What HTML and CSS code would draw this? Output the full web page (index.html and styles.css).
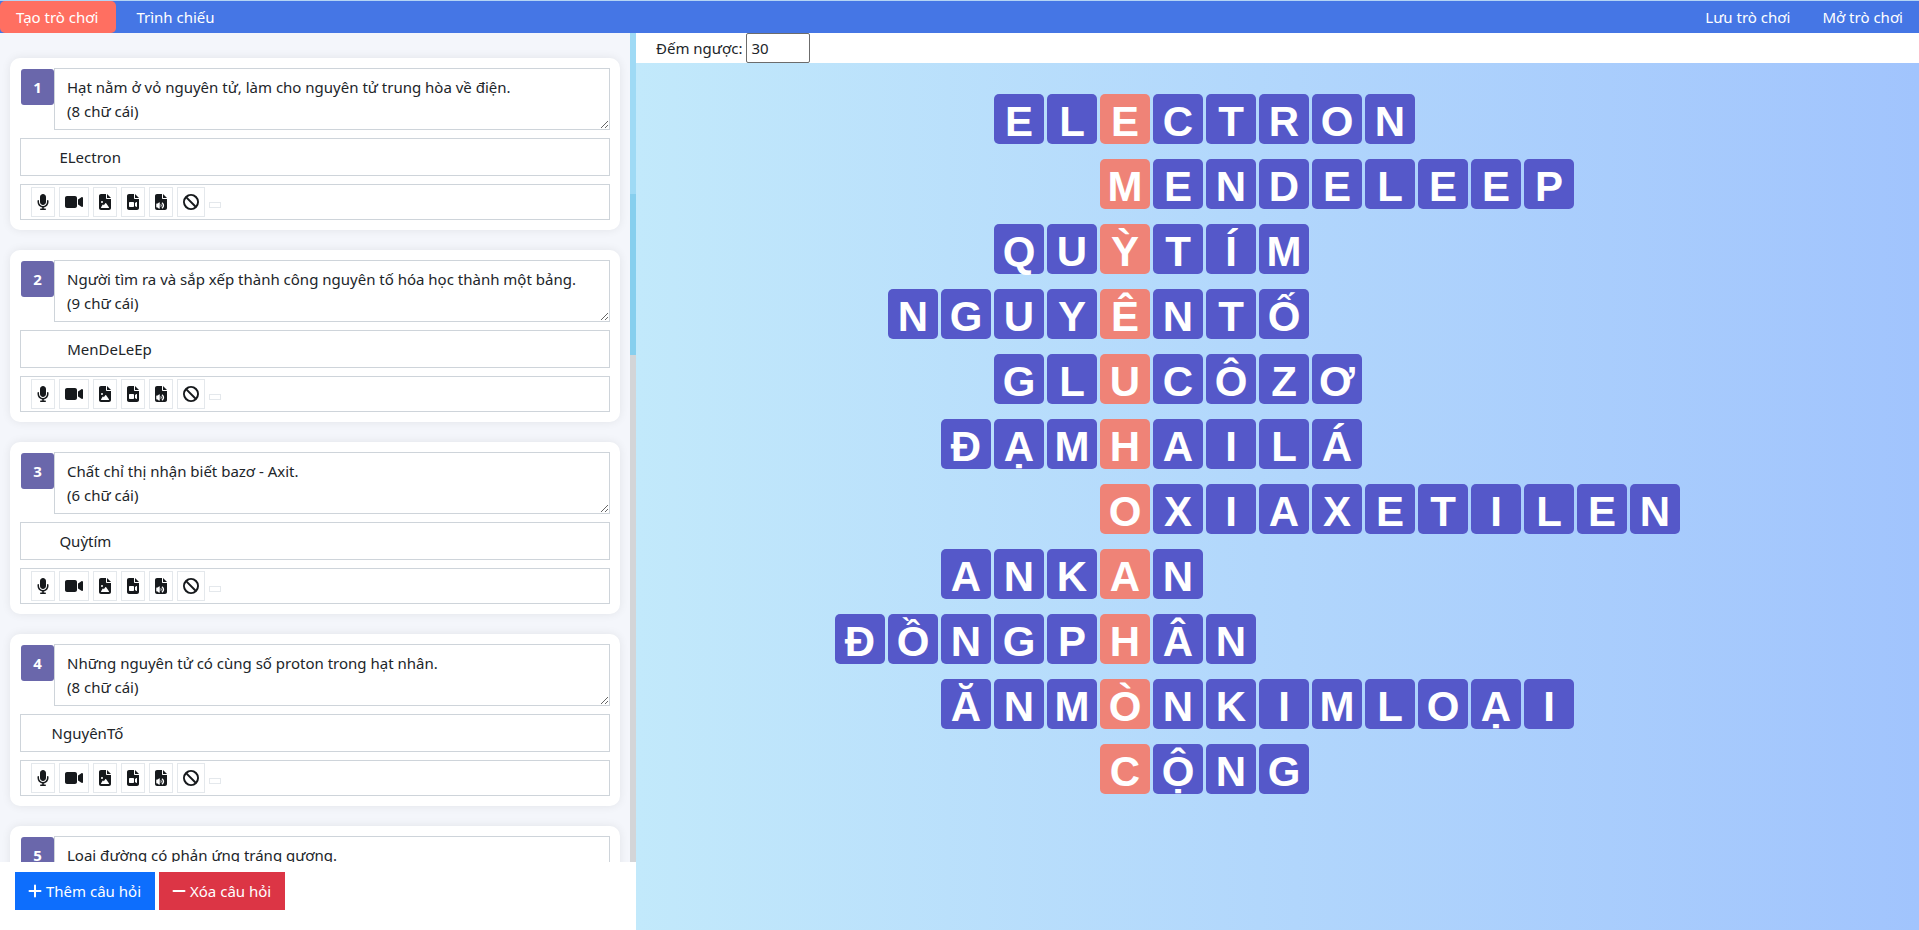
FILE: index.html
```html
<!DOCTYPE html>
<html lang="vi">
<head>
<meta charset="utf-8">
<title>Ô chữ</title>
<link rel="stylesheet" href="styles.css">
</head>
<body>
<svg class="sprite" aria-hidden="true">
  <symbol id="mic" viewBox="0 0 384 512"><path d="M192 0c-53 0-96 43-96 96v160c0 53 43 96 96 96s96-43 96-96V96c0-53-43-96-96-96zM64 216c0-13-11-24-24-24s-24 11-24 24v40c0 89 66 163 152 174v34h-48c-13 0-24 11-24 24s11 24 24 24h144c13 0 24-11 24-24s-11-24-24-24h-48v-34c86-11 152-85 152-174v-40c0-13-11-24-24-24s-24 11-24 24v40c0 71-57 128-128 128S64 327 64 256v-40z"/></symbol>
  <symbol id="video" viewBox="0 0 576 512"><path d="M0 128c0-35 29-64 64-64h256c35 0 64 29 64 64v256c0 35-29 64-64 64H64c-35 0-64-29-64-64V128zm559-28c10 6 17 16 17 28v256c0 12-7 23-17 28s-23 5-33-1l-96-64-14-10V175l14-10 96-64c10-6 23-7 33-1z"/></symbol>
  <symbol id="file-image" viewBox="0 0 384 512"><path fill-rule="evenodd" d="M64 0C29 0 0 29 0 64v384c0 35 29 64 64 64h256c35 0 64-29 64-64V160H256c-18 0-32-14-32-32V0H64zm192 0v128h128L256 0zM64 256a32 32 0 1 1 64 0 32 32 0 1 1-64 0zm152 32c5 0 10 3 13 7l88 128c3 5 4 11 1 16s-8 9-14 9H80c-6 0-11-3-14-9s-2-12 1-17l48-80c3-4 8-7 13-7s10 3 13 7l12 19 49-66c3-4 8-7 14-7z"/></symbol>
  <symbol id="file-video" viewBox="0 0 384 512"><path fill-rule="evenodd" d="M64 0C29 0 0 29 0 64v384c0 35 29 64 64 64h256c35 0 64-29 64-64V160H256c-18 0-32-14-32-32V0H64zm192 0v128h128L256 0zM64 288c0-18 14-32 32-32h96c18 0 32 14 32 32v96c0 18-14 32-32 32H96c-18 0-32-14-32-32v-96zm237 125-45-29v-96l45-29c8-6 19 0 19 10v134c0 10-11 16-19 10z"/></symbol>
  <symbol id="file-audio" viewBox="0 0 384 512"><path fill-rule="evenodd" d="M64 0C29 0 0 29 0 64v384c0 35 29 64 64 64h256c35 0 64-29 64-64V160H256c-18 0-32-14-32-32V0H64zm192 0v128h128L256 0zM56 304h27l45-36c10-8 24-1 24 12v176c0 13-14 20-24 12l-45-36H56c-9 0-16-7-16-16v-96c0-9 7-16 16-16zm133 16c34 20 34 76 0 96l-14-22c14-14 14-38 0-52l14-22zm43-56c80 48 80 160 0 208l-22-34c50-36 50-104 0-140l22-34z"/></symbol>
  <symbol id="ban" viewBox="0 0 512 512"><path fill-rule="evenodd" d="M256 0a256 256 0 1 0 0 512 256 256 0 1 0 0-512zm111 412L100 145a192 192 0 0 0 267 267zm45-45A192 192 0 0 0 145 100l267 267z"/></symbol>
  <symbol id="plus" viewBox="0 0 448 512"><path d="M256 80a32 32 0 1 0-64 0v144H48a32 32 0 1 0 0 64h144v144a32 32 0 1 0 64 0V288h144a32 32 0 1 0 0-64H256V80z"/></symbol>
  <symbol id="minus" viewBox="0 0 448 512"><path d="M48 224h352a32 32 0 1 1 0 64H48a32 32 0 1 1 0-64z"/></symbol>
</svg>

<nav class="navbar">
  <button class="nav-item active" type="button">Tạo trò chơi</button>
  <button class="nav-item" type="button">Trình chiếu</button>
  <span class="spacer"></span>
  <button class="nav-item" type="button">Lưu trò chơi</button>
  <button class="nav-item" type="button">Mở trò chơi</button>
</nav>

<div class="workspace">
  <section class="editor">
    <div class="scroll-area">
      <div class="questions" id="questions"></div>
      <div class="scrollbar"><div class="before"></div><div class="thumb"></div><div class="after"></div></div>
    </div>
    <div class="actions">
      <button class="btn add" type="button"><svg class="sign"><use href="#plus"/></svg>Thêm câu hỏi</button>
      <button class="btn remove" type="button"><svg class="sign"><use href="#minus"/></svg>Xóa câu hỏi</button>
    </div>
  </section>

  <main class="preview">
    <div class="timer">
      <label for="countdown">Đếm ngược:</label>
      <input id="countdown" type="text" value="30">
    </div>
    <div class="stage"><div class="board" id="board"></div></div>
  </main>
</div>
<script src="app.js"></script>
</body>
</html>
```

FILE: styles.css
```css
* { box-sizing: border-box; }

body {
  margin: 0;
  height: 100vh;
  display: flex;
  flex-direction: column;
  overflow: hidden;
  border-top: 1px solid #b4d4f4;
  font: 15px/24px "Noto Sans", "Open Sans", sans-serif;
  color: #212529;
  background: #fff;
}

button, input, textarea { font: inherit; color: inherit; }
.sprite { display: none; }

.navbar { display: flex; flex: none; height: 32px; background: #4576e5; }
.nav-item {
  padding: 0 16px;
  border: 0;
  border-radius: 5px;
  background: none;
  color: #fff;
}
.nav-item.active { margin-right: 4px; padding-right: 18px; background: #ff6f61; }
.spacer { flex: 1; }

.workspace { flex: 1; min-height: 0; display: flex; }

.editor { flex: 0 0 636px; display: flex; flex-direction: column; }
.scroll-area { flex: 1; min-height: 0; display: flex; background: #f4f6fb; }
.questions {
  flex: 1;
  overflow: hidden;
  padding: 25px 10px 0;
  display: flex;
  flex-direction: column;
  gap: 20px;
}
.scrollbar { flex: none; width: 6px; display: flex; flex-direction: column; }
.before { flex: 161; background: #9fdaf5; }
.thumb { flex: 161; background: #87cfee; }
.after { flex: 507; background: #d3d5d8; }

.card {
  flex: none;
  display: flex;
  flex-direction: column;
  gap: 8px;
  padding: 10px;
  border-radius: 10px;
  background: #fff;
  box-shadow: 0 0 10px rgba(0, 0, 0, 0.08);
}
.question { display: flex; align-items: flex-start; }
.number {
  flex: none;
  width: 33px;
  margin: 1px 0 0 1px;
  padding: 6px 0;
  border-radius: 3px;
  background: #6a67ab;
  color: #fff;
  font-weight: 700;
  text-align: center;
}
.prompt, .answer, .media { border: 1px solid #ced4da; background: #fff; }
.prompt { flex: 1; height: 62px; padding: 6px 12px; overflow: hidden; outline: 0; resize: vertical; }
.answer { width: 100%; height: 38px; padding: 6px 15px; }
.media { height: 36px; padding: 2px 10px; display: flex; align-items: center; gap: 4px; }
.tool {
  flex: none;
  height: 30px;
  padding: 0 5px;
  border: 1px solid #e4e8ec;
  background: #fff;
  display: flex;
  align-items: center;
}
.tool svg { width: 12px; height: 16px; fill: #16191c; }
.tool .wide { width: 18px; }
.tool .round { width: 16px; }
.media .empty { width: 12px; height: 6px; margin-top: 6px; border: 1px solid #e4e8ec; }

.actions { flex: none; height: 68px; padding: 10px 15px; display: flex; align-items: flex-start; gap: 4px; }
.btn { display: flex; align-items: center; gap: 4px; height: 38px; padding: 0 14px 0 13px; border: 0; color: #fff; }
.btn.add { background: #0d6efd; }
.btn.remove { background: #dc3545; }
.sign { width: 14px; height: 16px; fill: #fff; }

.preview { flex: 1; min-width: 0; display: flex; flex-direction: column; }
.timer { flex: none; height: 30px; padding-left: 20px; display: flex; align-items: center; gap: 4px; }
.timer input { width: 64px; height: 30px; padding: 0 4px; border: 1px solid #6c6c6c; border-radius: 2px; background: #fff; }

.stage {
  flex: 1;
  padding: 31px 40px 0 0;
  display: flex;
  justify-content: center;
  align-items: flex-start;
  background: linear-gradient(to right, #c2e9fb, #a1c4fd);
}
.board { display: grid; grid-template-columns: repeat(16, 50px); grid-auto-rows: 50px; gap: 15px 3px; }
.tile {
  border-radius: 5px;
  background: #5558c9;
  color: #fff;
  font: 700 42px/56px "Liberation Sans", Arial, sans-serif;
  text-align: center;
}
.tile.key { background: #ef8377; }
```

FILE: app.js
```js
const questions = [
  ["Hạt nằm ở vỏ nguyên tử, làm cho nguyên tử trung hòa về điện.\n(8 chữ cái)", "      ELectron"],
  ["Người tìm ra và sắp xếp thành công nguyên tố hóa học thành một bảng.\n(9 chữ cái)", "        MenDeLeEp"],
  ["Chất chỉ thị nhận biết bazơ - Axit.\n(6 chữ cái)", "      Quỳtím"],
  ["Những nguyên tử có cùng số proton trong hạt nhân.\n(8 chữ cái)", "    NguyênTố"],
  ["Loại đường có phản ứng tráng gương.\n(7 chữ cái)", "      Glucôzơ"]
];

const tools = [
  ["mic", "", "Ghi âm"], ["video", "wide", "Quay phim"], ["file-image", "", "Hình ảnh"],
  ["file-video", "", "Video"], ["file-audio", "", "Âm thanh"], ["ban", "round", "Xóa tệp"]
];

const toolButtons = tools.map(([icon, size, label]) =>
  `<button class="tool" type="button" aria-label="${label}"><svg class="${size}"><use href="#${icon}"/></svg></button>`
).join("");

document.getElementById("questions").innerHTML = questions.map(([prompt, answer], i) => `
  <article class="card">
    <div class="question">
      <label class="number" for="q${i}">${i + 1}</label>
      <textarea class="prompt" id="q${i}" spellcheck="false">${prompt}</textarea>
    </div>
    <input class="answer" type="text" aria-label="Đáp án ${i + 1}" value="${answer}">
    <div class="media">${toolButtons}<span class="empty"></span></div>
  </article>`).join("");

// Each entry: the word and the index of its letter in the key column.
const words = [
  ["ELECTRON", 2], ["MENDELEEP", 0], ["QUỲTÍM", 2], ["NGUYÊNTỐ", 4],
  ["GLUCÔZƠ", 2], ["ĐẠMHAILÁ", 3], ["OXIAXETILEN", 0], ["ANKAN", 3],
  ["ĐỒNGPHÂN", 5], ["ĂNMÒNKIMLOẠI", 3], ["CỘNG", 0]
];
const keyColumn = 6;

document.getElementById("board").innerHTML = words.map(([word, key], row) =>
  [...word.normalize("NFC")].map((letter, i) =>
    `<div class="tile${i === key ? " key" : ""}" style="grid-area:${row + 1}/${keyColumn - key + i}">${letter}</div>`
  ).join("")
).join("");
```
